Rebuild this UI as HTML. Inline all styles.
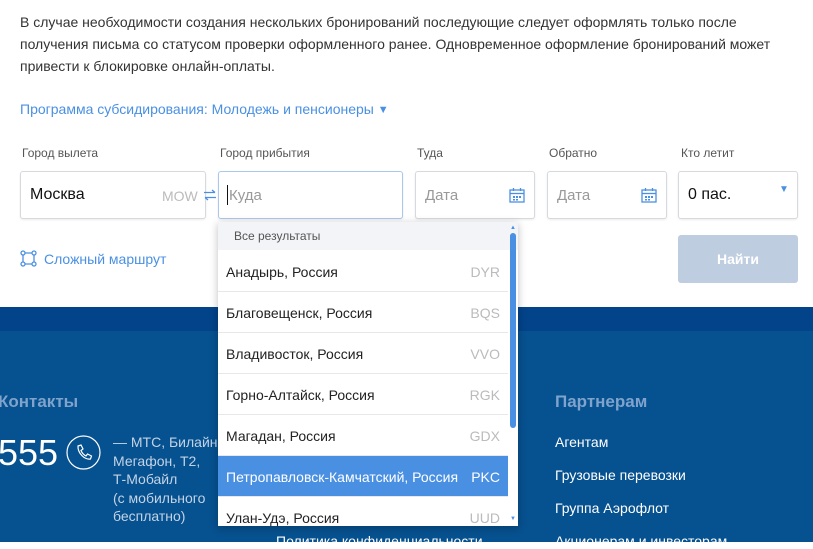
<!DOCTYPE html>
<html><head><meta charset="utf-8"><style>
*{margin:0;padding:0;box-sizing:border-box}
body{width:813px;height:542px;overflow:hidden;position:relative;background:#fff;font-family:"Liberation Sans",sans-serif;color:#222}
.a{position:absolute;white-space:nowrap}
.lbl{font-size:12px;color:#555;top:146px}
.box{position:absolute;top:171px;height:48px;border:1px solid #d6d9dd;border-radius:3px;background:#fff;box-shadow:0 1px 2px rgba(0,0,0,.08)}
.ph{color:#999;font-size:15px}
.row{position:absolute;left:0;width:290px;height:41px;border-bottom:1px solid #e8e8e8;font-size:14px;line-height:42px;padding-left:8px;color:#222}
.row span{position:absolute;right:8px;color:#bbb}
.fl{color:#fff;font-size:14px}
</style></head><body>
<div class="a" style="left:20px;top:11px;font-size:14px;line-height:22px;color:#333">В случае необходимости создания нескольких бронирований последующие следует оформлять только после<br>получения письма со статусом проверки оформленного ранее. Одновременное оформление бронирований может<br>привести к блокировке онлайн-оплаты.</div>
<div class="a" style="left:20px;top:101px;font-size:14px;color:#4a90e2">Программа субсидирования: Молодежь и пенсионеры <span style="font-size:11px;position:relative;top:-1px">▼</span></div>

<div class="a lbl" style="left:22px">Город вылета</div>
<div class="a lbl" style="left:220px">Город прибытия</div>
<div class="a lbl" style="left:417px">Туда</div>
<div class="a lbl" style="left:549px">Обратно</div>
<div class="a lbl" style="left:681px">Кто летит</div>

<div class="box" style="left:20px;width:186px"><div class="a" style="left:9px;top:14px;font-size:16px;color:#111">Москва</div><div class="a" style="left:141px;top:16px;font-size:14px;color:#bbb">MOW</div></div>
<svg class="a" style="left:203px;top:189px" width="14" height="12" viewBox="0 0 14 12" fill="none" stroke="#4a90e2" stroke-width="1.3"><path d="M1 3.5h11M9 1l3 2.5M13 8.5H2M5 11L2 8.5"/></svg>
<div class="box" style="left:218px;width:185px;border-color:#a9c8ee"><div class="a" style="left:8px;top:13px;width:1px;height:20px;background:#111"></div><div class="a ph" style="left:10px;top:15px">Куда</div></div>
<div class="box" style="left:415px;width:120px"><div class="a ph" style="left:9px;top:15px">Дата</div>
<svg class="a" style="left:93px;top:15px" width="16" height="16" viewBox="0 0 16 16" fill="none" stroke="#4a90e2" stroke-width="1.3"><rect x="1" y="3" width="14" height="12"/><line x1="1" y1="6.5" x2="15" y2="6.5"/><line x1="4.5" y1="1" x2="4.5" y2="4"/><line x1="11.5" y1="1" x2="11.5" y2="4"/><g fill="#4a90e2" stroke="none"><rect x="4" y="9" width="2" height="2"/><rect x="7" y="9" width="2" height="2"/><rect x="10" y="9" width="2" height="2"/><rect x="4" y="12" width="2" height="1.5"/><rect x="7" y="12" width="2" height="1.5"/></g></svg></div>
<div class="box" style="left:547px;width:120px"><div class="a ph" style="left:9px;top:15px">Дата</div>
<svg class="a" style="left:93px;top:15px" width="16" height="16" viewBox="0 0 16 16" fill="none" stroke="#4a90e2" stroke-width="1.3"><rect x="1" y="3" width="14" height="12"/><line x1="1" y1="6.5" x2="15" y2="6.5"/><line x1="4.5" y1="1" x2="4.5" y2="4"/><line x1="11.5" y1="1" x2="11.5" y2="4"/><g fill="#4a90e2" stroke="none"><rect x="4" y="9" width="2" height="2"/><rect x="7" y="9" width="2" height="2"/><rect x="10" y="9" width="2" height="2"/><rect x="4" y="12" width="2" height="1.5"/><rect x="7" y="12" width="2" height="1.5"/></g></svg></div>
<div class="box" style="left:678px;width:120px"><div class="a" style="left:9px;top:14px;font-size:16px;color:#111">0 пас.</div><div class="a" style="left:100px;top:12px;font-size:10px;color:#4a90e2">▼</div></div>

<svg class="a" style="left:20px;top:250px" width="17" height="17" viewBox="0 0 17 17" fill="none" stroke="#4a90e2" stroke-width="1.3"><circle cx="3" cy="3" r="2"/><circle cx="14" cy="3" r="2"/><circle cx="3" cy="14" r="2"/><circle cx="14" cy="14" r="2"/><path d="M5 3h7M3 5v7M14 5v7M5 14h7"/></svg>
<div class="a" style="left:44px;top:251px;font-size:14px;color:#4a90e2">Сложный маршрут</div>
<div class="a" style="left:678px;top:235px;width:120px;height:48px;background:#bfcde0;border-radius:3px;color:#fff;font-weight:bold;font-size:14px;text-align:center;line-height:48px">Найти</div>

<div class="a" style="left:0;top:307px;width:813px;height:24px;background:#034389"></div>
<div class="a" style="left:0;top:331px;width:813px;height:211px;background:#06518f"></div>
<div class="a" style="left:-2px;top:392px;font-size:17px;font-weight:bold;color:#7fa3cc">Контакты</div>
<div class="a" style="left:-2px;top:432px;font-size:36px;color:#fff">555</div>
<svg class="a" style="left:66px;top:435px" width="35" height="35" viewBox="0 0 35 35" fill="none" stroke="#fff" stroke-width="1.2"><circle cx="17.5" cy="17.5" r="16.5"/><path d="M12 11l3-1 2 4-2 1.5c1 2.5 3 4.5 5 5.5l1.5-2 4 2-1 3c-6 1-13-6-12.5-13z"/></svg>
<div class="a" style="left:113px;top:433px;font-size:14px;line-height:18.5px;color:#c3d3e6">— МТС, Билайн,<br>Мегафон, Т2,<br>Т-Мобайл<br>(с мобильного<br>бесплатно)</div>
<div class="a fl" style="left:276px;top:533px">Политика конфиденциальности</div>
<div class="a" style="left:555px;top:392px;font-size:17px;font-weight:bold;color:#7fa3cc">Партнерам</div>
<div class="a fl" style="left:555px;top:434px">Агентам</div>
<div class="a fl" style="left:555px;top:467px">Грузовые перевозки</div>
<div class="a fl" style="left:555px;top:500px">Группа Аэрофлот</div>
<div class="a fl" style="left:555px;top:533px">Акционерам и инвесторам</div>

<div class="a" style="left:218px;top:222px;width:300px;height:304px;background:#fff;box-shadow:0 2px 8px rgba(0,0,0,.25);overflow:hidden">
<div class="a" style="left:0;top:0;width:300px;height:28px;background:#f2f4f7;font-size:12px;color:#555;line-height:28px;padding-left:16px">Все результаты</div>
<div class="row" style="top:29px">Анадырь, Россия<span>DYR</span></div>
<div class="row" style="top:70px">Благовещенск, Россия<span>BQS</span></div>
<div class="row" style="top:111px">Владивосток, Россия<span>VVO</span></div>
<div class="row" style="top:152px">Горно-Алтайск, Россия<span>RGK</span></div>
<div class="row" style="top:193px">Магадан, Россия<span>GDX</span></div>
<div class="row" style="top:234px;background:#4a90e2;color:#fff">Петропавловск-Камчатский, Россия<span style="color:#fff">PKC</span></div>
<div class="row" style="top:275px">Улан-Удэ, Россия<span>UUD</span></div>
<div class="a" style="left:292px;top:11px;width:6px;height:195px;background:#4a90e2;border-radius:3px"></div>
<div class="a" style="left:292px;top:3px;font-size:6px;color:#4a90e2">▲</div>
<div class="a" style="left:292px;top:294px;font-size:6px;color:#4a90e2">▼</div>
</div>
</body></html>
